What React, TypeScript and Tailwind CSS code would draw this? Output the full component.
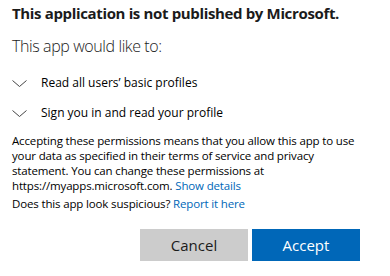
import React from 'react'

const Chevron: React.FC = () => (
  <svg width="15" height="7" viewBox="0 0 15 7" className="shrink-0">
    <path d="M0.5 0.5 L7.5 6.5 L14.5 0.5" fill="none" stroke="#444" strokeWidth="1" />
  </svg>
)

export default function App() {
  return (
    <div className="w-[390px] h-[276px] bg-white text-black font-['Segoe_UI','Open_Sans',sans-serif] pl-3 pr-[30px] pt-[3px]">
      <h1 className="text-[15px] leading-5 font-bold tracking-[-0.35px] text-[#1b1b1b]">
        This application is not published by Microsoft.
      </h1>

      <p className="mt-[11px] text-[16px] leading-6 font-light tracking-[-0.4px] text-[#1b1b1b]">This app would like to:</p>

      <ul className="mt-[15px] flex flex-col gap-[10px]">
        <li className="flex items-center gap-[14px] h-5 text-[12px]">
          <Chevron />
          <span>Read all users’ basic profiles</span>
        </li>
        <li className="flex items-center gap-[14px] h-5 text-[12px]">
          <Chevron />
          <span>Sign you in and read your profile</span>
        </li>
      </ul>

      <p className="mt-[10px] text-[11.5px] leading-[15px] tracking-[-0.15px] whitespace-nowrap">
        Accepting these permissions means that you allow this app to use
        <br />
        your data as specified in their terms of service and privacy
        <br />
        statement. You can change these permissions at
        <br />
        https://myapps.microsoft.com. <span className="text-[#0067b8]">Show details</span>
      </p>

      <p className="mt-[3px] text-[11.5px] leading-[15px] tracking-[-0.15px]">
        Does this app look suspicious? <span className="text-[#0067b8]">Report it here</span>
      </p>

      <div className="mt-[18px] flex justify-end gap-1">
        <button className="w-[108px] h-8 bg-[#cccccc] text-[15px] text-[#1b1b1b]">Cancel</button>
        <button className="w-[108px] h-8 bg-[#0067b8] text-[15px] text-white">Accept</button>
      </div>
    </div>
  )
}
